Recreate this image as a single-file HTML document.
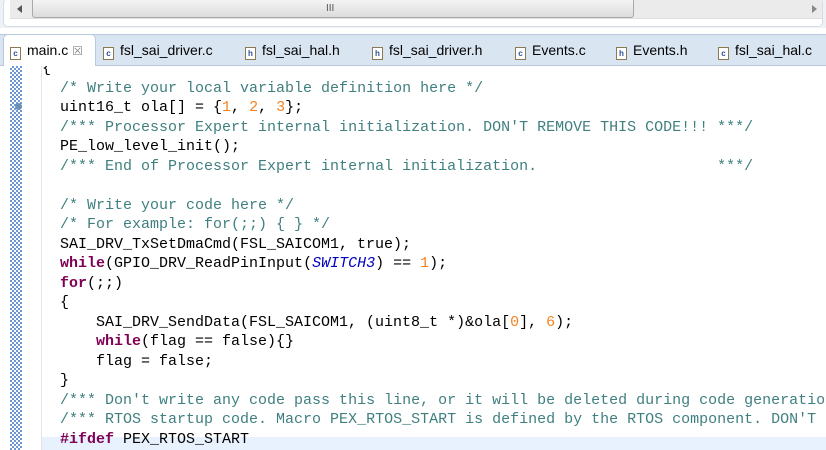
<!DOCTYPE html><html><head><style>
body{margin:0;width:826px;height:450px;overflow:hidden;background:#fff;position:relative;font-family:"Liberation Sans",sans-serif}
.a{position:absolute}
.clip{position:absolute;left:42px;top:66px;width:784px;height:384px;overflow:hidden}
.code{position:absolute;left:0;top:-7px;font-family:"Liberation Mono",monospace;font-size:15px;line-height:19.5px;white-space:pre;color:#000}
.c{color:#3f7f7f}.k{color:#7f0055;font-weight:bold}.n{color:#f58220}.m{color:#0000c0;font-style:italic}
.tab{position:absolute;top:42px;font-size:14px;color:#000;white-space:nowrap}
.ic{display:inline-block;width:9px;height:11px;border:1px solid #8a7a50;background:#fff;font-size:8px;line-height:11px;text-align:center;color:#2a4f9a;vertical-align:-1px;margin-right:6px;font-weight:bold}
</style></head><body>
<div class="a" style="left:0;top:0;width:826px;height:28px;background:#eef2f7"></div>
<div class="a" style="left:3px;top:-2px;width:818px;height:27px;background:#fff;border:1px solid #d8dde5;border-radius:5px"></div>
<div class="a" style="left:10px;top:0;width:812px;height:18px;background:#ebebeb;border-bottom:1px solid #e0e0e0"></div>
<div class="a" style="left:32px;top:0;width:600px;height:17px;background:linear-gradient(#f4f4f4,#dcdcdc);border:1px solid #aaa;border-top:none;border-radius:0 0 3px 3px"></div>
<div class="a" style="left:326px;top:3px;font-size:10px;color:#555">III</div>
<div class="a" style="left:17px;top:5px;width:0;height:0;border:4px solid transparent;border-right:5px solid #555;border-left:none"></div>
<div class="a" style="left:812px;top:5px;width:0;height:0;border:4px solid transparent;border-left:5px solid #888;border-right:none"></div>
<div class="a" style="left:0;top:34px;width:826px;height:30px;background:#dae5f2;border-top:1px solid #b9c9dd;border-bottom:1px solid #b9c9dd"></div>
<div class="a" style="left:3px;top:34px;width:91px;height:31px;background:#fff;border:1px solid #b9c9dd;border-bottom:none;border-radius:5px 5px 0 0"></div>
<div class="tab" style="left:10px"><span class="ic">c</span>main.c <span style="color:#888;font-size:12px">&#x2612;</span></div>
<div class="tab" style="left:103px"><span class="ic">c</span>fsl_sai_driver.c</div>
<div class="tab" style="left:245px"><span class="ic">h</span>fsl_sai_hal.h</div>
<div class="tab" style="left:372px"><span class="ic">h</span>fsl_sai_driver.h</div>
<div class="tab" style="left:515px"><span class="ic">c</span>Events.c</div>
<div class="tab" style="left:616px"><span class="ic">h</span>Events.h</div>
<div class="tab" style="left:718px"><span class="ic">c</span>fsl_sai_hal.c</div>
<div class="a" style="left:10px;top:66px;width:12px;height:384px;background:repeating-conic-gradient(#6f97d2 0 25%,#fff 0 50%) 0 0/4px 4px"></div>
<div class="a" style="left:41px;top:66px;width:1px;height:384px;background:#e4e4e4"></div>
<div class="a" style="left:15px;top:103px;width:7px;height:7px;border-radius:50%;background:#6c8fb8"></div>
<div class="a" style="left:42px;top:437px;width:784px;height:13px;background:#e8f2fe"></div>
<div class="clip"><div class="code"><span>{</span>
  <span class="c">/* Write your local variable definition here */</span>
  uint16_t ola[] = {<span class="n">1</span>, <span class="n">2</span>, <span class="n">3</span>};
  <span class="c">/*** Processor Expert internal initialization. DON'T REMOVE THIS CODE!!! ***/</span>
  PE_low_level_init();
  <span class="c">/*** End of Processor Expert internal initialization.                    ***/</span>

  <span class="c">/* Write your code here */</span>
  <span class="c">/* For example: for(;;) { } */</span>
  SAI_DRV_TxSetDmaCmd(FSL_SAICOM1, true);
  <span class="k">while</span>(GPIO_DRV_ReadPinInput(<span class="m">SWITCH3</span>) == <span class="n">1</span>);
  <span class="k">for</span>(;;)
  {
      SAI_DRV_SendData(FSL_SAICOM1, (uint8_t *)&amp;ola[<span class="n">0</span>], <span class="n">6</span>);
      <span class="k">while</span>(flag == false){}
      flag = false;
  }
  <span class="c">/*** Don't write any code pass this line, or it will be deleted during code generation</span>
  <span class="c">/*** RTOS startup code. Macro PEX_RTOS_START is defined by the RTOS component. DON'T MODIFY</span>
  <span class="k">#ifdef</span> PEX_RTOS_START</div></div>
</body></html>
